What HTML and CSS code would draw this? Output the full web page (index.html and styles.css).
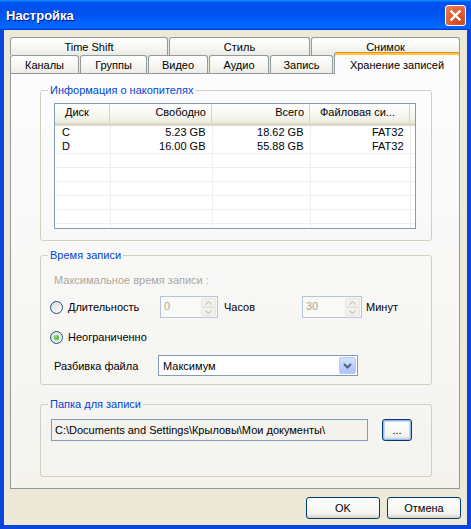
FILE: index.html
```html
<!DOCTYPE html>
<html lang="ru">

<head>
    <meta charset="UTF-8">
    <title>Настройка</title>
    <link rel="stylesheet" href="styles.css">
</head>

<body>
    <div class="window">
        <div class="titlebar">
            <span class="title">Настройка</span>
            <span class="close-btn">
                <svg width="19" height="19" viewBox="0 0 19 19">
                    <path d="M5.5 5.5 L13.5 13.5 M13.5 5.5 L5.5 13.5" stroke="#fff" stroke-width="2.4" stroke-linecap="square"/>
                </svg>
            </span>
        </div>

        <div class="client">
            <div class="tabs">
                <div class="tab-row">
                    <div class="tab tab-timeshift">Time Shift</div>
                    <div class="tab tab-style">Стиль</div>
                    <div class="tab tab-snap">Снимок</div>
                </div>
                <div class="tab-row">
                    <div class="tab tab-channels">Каналы</div>
                    <div class="tab tab-groups">Группы</div>
                    <div class="tab tab-video">Видео</div>
                    <div class="tab tab-audio">Аудио</div>
                    <div class="tab tab-record">Запись</div>
                    <div class="tab tab-storage active">Хранение записей</div>
                </div>
            </div>

            <div class="panel">
                <fieldset class="group">
                    <legend>Информация о накопителях</legend>
                    <div class="drives-body">
                        <div class="listview">
                            <table class="drives">
                                <colgroup>
                                    <col class="c-disk">
                                    <col class="c-free">
                                    <col class="c-total">
                                    <col class="c-fs">
                                    <col>
                                </colgroup>
                                <thead>
                                    <tr>
                                        <th class="h-left">Диск</th>
                                        <th class="h-right">Свободно</th>
                                        <th class="h-right">Всего</th>
                                        <th class="h-left">Файловая си...</th>
                                        <th class="h-last"></th>
                                    </tr>
                                </thead>
                                <tbody>
                                    <tr class="first">
                                        <td>C</td>
                                        <td class="num">5.23 GB</td>
                                        <td class="num">18.62 GB</td>
                                        <td class="num">FAT32</td>
                                        <td class="last"></td>
                                    </tr>
                                    <tr>
                                        <td>D</td>
                                        <td class="num">16.00 GB</td>
                                        <td class="num">55.88 GB</td>
                                        <td class="num">FAT32</td>
                                        <td class="last"></td>
                                    </tr>
                                    <tr><td></td><td></td><td></td><td></td><td class="last"></td></tr>
                                    <tr><td></td><td></td><td></td><td></td><td class="last"></td></tr>
                                    <tr><td></td><td></td><td></td><td></td><td class="last"></td></tr>
                                    <tr><td></td><td></td><td></td><td></td><td class="last"></td></tr>
                                    <tr><td></td><td></td><td></td><td></td><td class="last"></td></tr>
                                    <tr><td></td><td></td><td></td><td></td><td class="last"></td></tr>
                                </tbody>
                            </table>
                        </div>
                    </div>
                </fieldset>

                <fieldset class="group group-time">
                    <legend>Время записи</legend>
                    <div class="time-body">
                        <div class="max-label">Максимальное время записи :</div>

                        <div class="row row-duration">
                            <label class="radio-item radio-wide"><span class="radio"></span>Длительность</label>
                            <div class="spin spin-hours">
                                <span class="spin-value">0</span>
                                <span class="spin-arrows">
                                    <span class="spin-btn"><svg width="7" height="4" viewBox="0 0 7 4"><path d="M0.5 3.5 L3.5 0.5 L6.5 3.5" fill="none" stroke="#c6c5bb" stroke-width="1.2"/></svg></span>
                                    <span class="spin-btn"><svg width="7" height="4" viewBox="0 0 7 4"><path d="M0.5 0.5 L3.5 3.5 L6.5 0.5" fill="none" stroke="#c6c5bb" stroke-width="1.2"/></svg></span>
                                </span>
                            </div>
                            <span class="unit unit-hours">Часов</span>
                            <div class="spin spin-minutes">
                                <span class="spin-value">30</span>
                                <span class="spin-arrows">
                                    <span class="spin-btn"><svg width="7" height="4" viewBox="0 0 7 4"><path d="M0.5 3.5 L3.5 0.5 L6.5 3.5" fill="none" stroke="#c6c5bb" stroke-width="1.2"/></svg></span>
                                    <span class="spin-btn"><svg width="7" height="4" viewBox="0 0 7 4"><path d="M0.5 0.5 L3.5 3.5 L6.5 0.5" fill="none" stroke="#c6c5bb" stroke-width="1.2"/></svg></span>
                                </span>
                            </div>
                            <span class="unit unit-minutes">Минут</span>
                        </div>

                        <div class="row row-unlimited">
                            <label class="radio-item"><span class="radio checked"></span>Неограниченно</label>
                        </div>

                        <div class="row row-split">
                            <span class="split-label">Разбивка файла</span>
                            <div class="combo">
                                <span class="combo-value">Максимум</span>
                                <span class="combo-btn">
                                    <svg width="9" height="6" viewBox="0 0 9 6"><path d="M1 1 L4.5 4.5 L8 1" fill="none" stroke="#4d6185" stroke-width="2"/></svg>
                                </span>
                            </div>
                        </div>
                    </div>
                </fieldset>

                <fieldset class="group group-folder">
                    <legend>Папка для записи</legend>
                    <div class="folder-body">
                        <div class="path-box">C:\Documents and Settings\Крыловы\Мои документы\</div>
                        <button class="xp-btn browse-btn">...</button>
                    </div>
                </fieldset>
            </div>

            <div class="dialog-buttons">
                <button class="xp-btn dlg-btn">OK</button>
                <button class="xp-btn dlg-btn">Отмена</button>
            </div>
        </div>
    </div>
</body>

</html>
```

FILE: styles.css
```css
* {
    box-sizing: border-box;
}

body {
    margin: 0;
    font-family: "Liberation Sans", Arial, sans-serif;
    font-size: 11px;
    color: #000;
    background: #0a46dd;
}

.window {
    width: 471px;
    height: 529px;
    display: flex;
    flex-direction: column;
    background: #0a46dd;
}

/* title bar */
.titlebar {
    flex: none;
    height: 30px;
    display: flex;
    align-items: center;
    justify-content: space-between;
    padding: 0 5px 0 6px;
    background: linear-gradient(180deg, #0997ff, #0053ee 8%, #0050ee 40%, #0066ff 88%, #0066ff 93%, #005bff 95%, #003dd7 96%, #003dd7);
}

.title {
    color: #fff;
    font-weight: bold;
    font-size: 13px;
    text-shadow: 1px 1px #0f1089;
}

.close-btn {
    width: 21px;
    height: 21px;
    display: flex;
    align-items: center;
    justify-content: center;
    border: 1px solid #fff;
    border-radius: 3px;
    background: radial-gradient(circle at 70% 80%, #cc4621, #e0592f 40%, #e87a56 90%);
}

.client {
    flex: 1;
    margin: 0 4px 4px;
    padding: 7px 6px 0;
    background: #ece9d8;
}

/* tabs */
.tabs {
    height: 36px;
}

.tab-row {
    display: flex;
    align-items: flex-start;
    gap: 1px;
    height: 18px;
    width: 450px;
}

.tab {
    flex: none;
    height: 18px;
    display: flex;
    align-items: center;
    justify-content: center;
    white-space: nowrap;
    font-weight: normal;
    border: 1px solid #919b9c;
    border-bottom: none;
    border-radius: 3px 3px 0 0;
    background: linear-gradient(#ffffff, #f7f7f4 50%, #ecebe5);
}

.tab-timeshift { width: 158px; }
.tab-style { width: 141px; }
.tab-snap { width: 149px; }
.tab-channels { width: 69px; }
.tab-groups { width: 67px; }
.tab-video { width: 60px; }
.tab-audio { width: 60px; }
.tab-record { width: 63px; }
.tab-storage { width: 126px; }

.tab.active {
    position: relative;
    z-index: 1;
    height: 22px;
    margin-top: -3px;
    padding-top: 2px;
    border-top: 1px solid #e68b2c;
    box-shadow: inset 0 2px #ffc73c;
    background: #fcfcfe;
}

/* panel */
.panel {
    width: 450px;
    height: 416px;
    padding: 9px 27px 0 29px;
    border: 1px solid #919b9c;
    background: linear-gradient(#fcfcfe, #f4f3ee);
}

.group {
    margin: 0;
    padding: 0;
    min-width: 0;
    border: 1px solid #d0d0bf;
    border-radius: 3px;
}

.group legend {
    margin-left: 7px;
    padding: 0 2px;
    line-height: 14px;
    color: #0046d5;
}

.group-time {
    margin-top: 7px;
}

.group-folder {
    margin-top: 12px;
}

/* drive list */
.drives-body {
    padding: 6px 0 11px 13px;
}

.listview {
    width: 362px;
    height: 126px;
    overflow: hidden;
    border: 1px solid #7f9db9;
    background: #fff;
}

.drives {
    width: 360px;
    table-layout: fixed;
    border-collapse: collapse;
}

.c-disk { width: 55px; }
.c-free { width: 102px; }
.c-total { width: 98px; }
.c-fs { width: 100px; }

.drives th {
    height: 20px;
    padding: 0 0 2px;
    font-weight: normal;
    white-space: nowrap;
    overflow: hidden;
    border-bottom: 3px solid #dcd8c8;
    box-shadow: inset -1px 0 #d6d2c2;
    background: linear-gradient(#ffffff, #f5f4ee 70%, #ebeadb);
}

.drives th.h-left { text-align: left; padding-left: 10px; }
.drives th.h-right { text-align: right; padding-right: 6px; }
.drives th.h-last { box-shadow: none; }

.drives td {
    height: 14px;
    padding: 0;
    line-height: 13px;
    white-space: nowrap;
    border-right: 1px solid #eeeeee;
    border-bottom: 1px solid #eeeeee;
}

.drives tr.first td {
    border-bottom-color: #fff;
}

.drives td:first-child {
    padding-left: 7px;
}

.drives td.num {
    text-align: right;
    padding-right: 6px;
}

.drives td.last {
    border-right: none;
}

/* recording time */
.time-body {
    padding: 11px 0 8px;
}

.max-label {
    height: 14px;
    line-height: 14px;
    padding-left: 13px;
    color: #aca899;
}

.row {
    display: flex;
    align-items: center;
}

.row-duration {
    height: 22px;
    margin-top: 9px;
    padding-left: 9px;
}

.row-unlimited {
    height: 14px;
    margin-top: 12px;
    padding-left: 9px;
}

.row-split {
    height: 21px;
    margin-top: 11px;
    padding-left: 13px;
}

.radio-item {
    display: flex;
    align-items: center;
    gap: 5px;
}

.radio-wide {
    width: 110px;
}

.radio {
    width: 13px;
    height: 13px;
    display: flex;
    align-items: center;
    justify-content: center;
    border: 1px solid #1c5180;
    border-radius: 50%;
    background: linear-gradient(135deg, #dcdcd7, #ffffff);
}

.radio.checked::after {
    content: "";
    width: 5px;
    height: 5px;
    border-radius: 50%;
    background: radial-gradient(circle at 35% 35%, #7de77a, #21a121);
}

.spin {
    height: 22px;
    display: flex;
    border: 1px solid #b7c4d7;
    background: #f9f9f6;
}

.spin-hours { width: 58px; }
.spin-minutes { width: 60px; }

.spin-value {
    flex: 1;
    padding: 3px 0 0 3px;
    color: #aca899;
}

.spin-arrows {
    width: 16px;
    display: flex;
    flex-direction: column;
    padding: 1px 1px 1px 0;
}

.spin-btn {
    flex: 1;
    display: flex;
    align-items: center;
    justify-content: center;
    border: 1px solid #e6e5dd;
    border-radius: 2px;
    background: #f3f3ee;
}

.unit-hours {
    width: 84px;
    padding-left: 6px;
}

.unit-minutes {
    padding-left: 4px;
}

.split-label {
    width: 104px;
}

.combo {
    width: 200px;
    height: 21px;
    display: flex;
    align-items: center;
    padding: 1px;
    border: 1px solid #7f9db9;
    background: #fff;
}

.combo-value {
    flex: 1;
    padding-left: 3px;
}

.combo-btn {
    width: 17px;
    height: 17px;
    display: flex;
    align-items: center;
    justify-content: center;
    border: 1px solid #bccbf3;
    border-radius: 2px;
    background: linear-gradient(#d7e3fd, #b9cdfb 60%, #aec3f6);
}

/* folder */
.folder-body {
    display: flex;
    align-items: center;
    padding: 8px 0 35px 10px;
}

.path-box {
    width: 317px;
    height: 22px;
    padding: 4px 0 0 3px;
    white-space: nowrap;
    border: 1px solid #7f9db9;
    background: #f3f2ec;
}

.xp-btn {
    font-family: "Liberation Sans", Arial, sans-serif;
    font-size: 11px;
    color: #000;
    padding: 0;
    border: 1px solid #003c74;
    border-radius: 3px;
    background: linear-gradient(#ffffff, #f3f3ef 80%, #d6d0c5);
}

.browse-btn {
    width: 30px;
    height: 22px;
    margin-left: 14px;
    box-shadow: inset 0 0 0 1px #9db8ec, inset 0 0 0 2px #c6d8f7;
}

.dialog-buttons {
    display: flex;
    justify-content: flex-end;
    gap: 7px;
    margin-top: 8px;
}

.dlg-btn {
    width: 74px;
    height: 22px;
}
```
